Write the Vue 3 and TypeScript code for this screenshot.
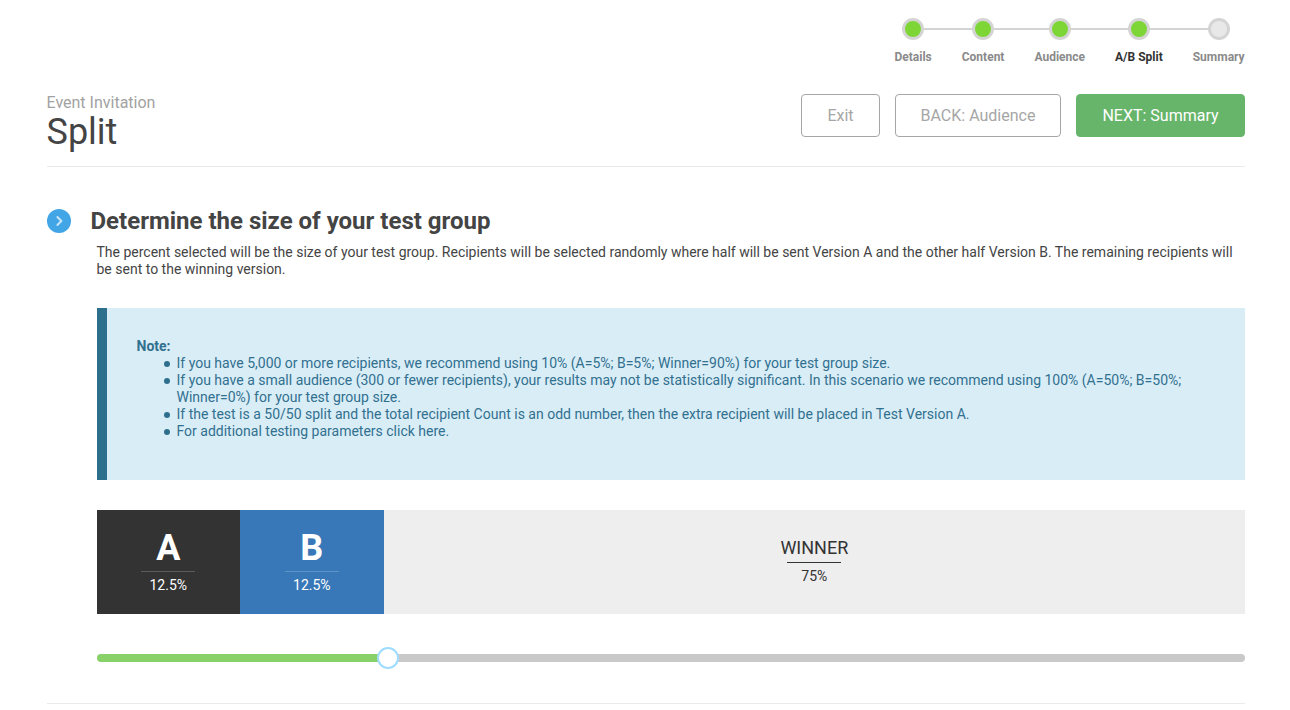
<script setup lang="ts">
const steps = [
  { label: 'Details', done: true, active: false },
  { label: 'Content', done: true, active: false },
  { label: 'Audience', done: true, active: false },
  { label: 'A/B Split', done: true, active: true },
  { label: 'Summary', done: false, active: false },
]
const notes = [
  'If you have 5,000 or more recipients, we recommend using 10% (A=5%; B=5%; Winner=90%) for your test group size.',
  'If you have a small audience (300 or fewer recipients), your results may not be statistically significant. In this scenario we recommend using 100% (A=50%; B=50%; Winner=0%) for your test group size.',
  'If the test is a 50/50 split and the total recipient Count is an odd number, then the extra recipient will be placed in Test Version A.',
  'For additional testing parameters click here.',
]
</script>

<template>
  <div class="page">
    <nav class="stepper">
      <div v-for="(s, i) in steps" :key="s.label" class="step" :class="{ active: s.active, last: i === steps.length - 1 }">
        <span class="dot" :class="{ done: s.done }"></span>
        <span class="label">{{ s.label }}</span>
      </div>
    </nav>

    <header class="head">
      <div>
        <div class="eyebrow">Event Invitation</div>
        <h1>Split</h1>
      </div>
      <div class="actions">
        <button class="btn exit">Exit</button>
        <button class="btn back">BACK: Audience</button>
        <button class="btn next">NEXT: Summary</button>
      </div>
    </header>

    <section class="section">
      <div class="title-row">
        <span class="chev">
          <svg width="24" height="24" viewBox="0 0 24 24"><path d="M10.4 8 14.4 12l-4 4" fill="none" stroke="#c8e6fa" stroke-width="2" stroke-linecap="round" stroke-linejoin="round"/></svg>
        </span>
        <h2>Determine the size of your test group</h2>
      </div>
      <div class="body">
        <p class="intro">The percent selected will be the size of your test group. Recipients will be selected randomly where half will be sent Version A and the other half Version B. The remaining recipients will be sent to the winning version.</p>

        <div class="note">
          <strong>Note:</strong>
          <ul>
            <li v-for="n in notes" :key="n">{{ n }}</li>
          </ul>
        </div>

        <div class="split">
          <div class="cell a"><span class="big">A</span><span class="pct">12.5%</span></div>
          <div class="cell b"><span class="big">B</span><span class="pct">12.5%</span></div>
          <div class="winner"><span class="wname">WINNER</span><span class="wpct">75%</span></div>
        </div>

        <div class="slider">
          <div class="fill"></div>
          <div class="rest"></div>
          <span class="thumb"></span>
        </div>
      </div>
    </section>
    <hr class="rule" />
  </div>
</template>

<style>
html, body { margin: 0; background: #fff; }
</style>

<style scoped>
.page {
  box-sizing: border-box;
  width: 1290px;
  height: 710px;
  padding: 18px 45px 0 46.5px;
  overflow: hidden;
  font-family: Roboto, "Liberation Sans", sans-serif;
  font-size: 14px;
  line-height: 17px;
  color: #444;
}
.stepper { display: flex; justify-content: flex-end; gap: 30px; height: 76px; padding-right: 0.4px; }
.step { position: relative; display: flex; flex-direction: column; align-items: center; }
.dot {
  position: relative;
  z-index: 1;
  box-sizing: border-box;
  width: 22px;
  height: 22px;
  border: 3px solid #d4d4d4;
  border-radius: 50%;
  background: #e8e8e8;
}
.dot.done { background: #7ed636; }
.step::after {
  content: "";
  position: absolute;
  top: 10px;
  left: 50%;
  width: 90px;
  height: 2px;
  background: #d4d4d4;
}
.step.last::after { display: none; }
.label { margin-top: 10px; font-size: 12px; line-height: 14px; font-weight: 700; color: #8a8a8a; white-space: nowrap; }
.step.active .label { color: #333; }

.head { display: flex; justify-content: space-between; border-bottom: 1px solid #eaeaea; height: 72px; }
.eyebrow { font-size: 16px; line-height: 17px; color: #a2a2a2; }
h1 { margin: 1px 0 0; font-size: 36px; line-height: 40px; font-weight: 400; color: #444; }
.actions { display: flex; gap: 15px; }
.btn {
  box-sizing: border-box;
  height: 43px;
  border: 1px solid #a6a6a6;
  border-radius: 4px;
  background: #fff;
  color: #a6a6a6;
  font: 400 16px/20px Roboto, "Liberation Sans", sans-serif;
  padding: 0;
}
.exit { width: 79px; }
.back { width: 166px; }
.next { width: 169px; background: #66b56b; border-color: #66b56b; color: #fff; }

.section { padding-top: 40px; }
.title-row { display: flex; align-items: center; gap: 20px; height: 28px; }
.chev { width: 24px; height: 24px; border-radius: 50%; background: #42a5e5; display: flex; }
h2 { margin: 0; font-size: 24px; line-height: 28px; font-weight: 700; color: #444; }
.body { margin-left: 50px; }
.intro { margin: 9px 0 0; color: #444; }
.note {
  margin-top: 30px;
  height: 172px;
  box-sizing: border-box;
  padding: 30px 30px 0;
  border-left: 10px solid #2e6f8e;
  background: #d9edf7;
  color: #31708f;
}
.note strong { display: block; }
ul { margin: 0; padding-left: 40px; list-style: none; }
li { position: relative; }
li::before {
  content: "";
  position: absolute;
  left: -13px;
  top: 6px;
  width: 6px;
  height: 6px;
  border-radius: 50%;
  background: #2e6f8e;
}
.split { display: flex; height: 104px; margin-top: 30px; }
.cell {
  width: 12.5%;
  display: flex;
  flex-direction: column;
  align-items: center;
  color: #fff;
}
.cell.a { background: #333; }
.cell.b { background: #3878b8; }
.big {
  width: 54px;
  height: 62px;
  box-sizing: border-box;
  text-align: center;
  font-size: 36px;
  line-height: 42px;
  padding-top: 17px;
  font-weight: 700;
  border-bottom: 1px solid rgba(255,255,255,.2);
}
.pct { margin-top: 5px; }
.winner { flex: 1; background: #eee; display: flex; flex-direction: column; align-items: center; color: #333; padding-top: 28px; }
.wname { width: 54px; display: flex; justify-content: center; font-size: 18px; line-height: 20px; height: 25px; box-sizing: border-box; border-bottom: 1px solid #333; white-space: nowrap; }
.wpct { margin-top: 5px; font-size: 14px; }
.slider { position: relative; display: flex; height: 8px; margin-top: 40px; }
.fill { width: 291px; background: #88d068; border-radius: 4px 0 0 4px; }
.rest { flex: 1; background: #c9c9c9; border-radius: 0 4px 4px 0; }
.thumb {
  position: absolute;
  left: 280.5px;
  top: -7px;
  box-sizing: border-box;
  width: 22px;
  height: 22px;
  border: 2px solid #9fdcff;
  border-radius: 50%;
  background: #fff;
}
.rule { margin: 41px 0 0; border: 0; border-top: 1px solid #eaeaea; }
</style>
